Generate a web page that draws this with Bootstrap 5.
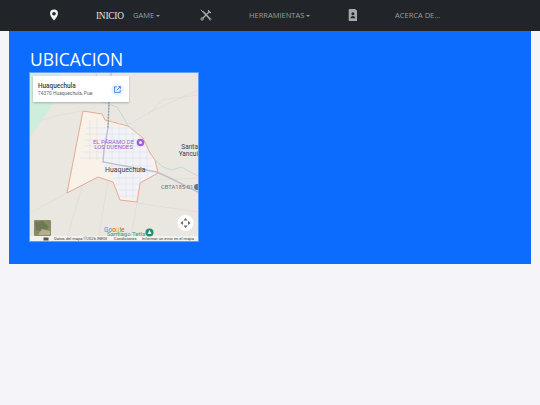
<!DOCTYPE html>
<html lang="es">
<head>
  <meta charset="UTF-8" />
  <meta name="viewport" content="width=device-width, initial-scale=1" />
  <title>Ubicacion</title>
  <link href="https://cdn.jsdelivr.net/npm/bootstrap@5.3.0/dist/css/bootstrap.min.css" rel="stylesheet" />
  <style>
    body {
      font-family: "Open Sans", sans-serif;
      background-color: #f4f4f9;
      min-height: 405px;
    }
    .top-bar {
      height: 31px;
      background-color: #212529;
      padding: 0 0 1px 48px;
    }
    .top-link {
      color: #9a9da0;
      font-size: 7.5px;
      line-height: 30px;
      text-decoration: none;
      white-space: nowrap;
    }
    .top-home {
      color: #e4e4e4;
      font-family: "Liberation Serif", serif;
      font-size: 9.4px;
      letter-spacing: -.25px;
      line-height: 31px;
    }
    .top-link.dropdown-toggle::after {
      margin-left: 2px;
      border-top-width: 2.5px;
      border-right-width: 2.5px;
      border-left-width: 2.5px;
      vertical-align: 1.5px;
    }
    .top-icon { display: block; }
    .slot-pin { width: 48px; }
    .slot-home { width: 37px; padding-top: 2px; }
    .slot-game { width: 67px; }
    .slot-tools { width: 49px; }
    .slot-tools-menu { width: 98.5px; }
    .slot-book { width: 47.5px; }
    .blue-panel {
      margin: 0 9px;
      height: 233px;
      background-color: #0b6cfd;
      padding: 16px 20px 0;
      color: #fff;
    }
    .blue-panel h1 {
      font-size: 17.4px;
      line-height: 25px;
      margin: 0 0 0 1px;
      font-weight: 400;
    }
    .map-box {
      width: 170px;
      height: 170px;
      position: relative;
      border: 1px solid #5fa0f5;
      background-color: #eeebe4;
      overflow: hidden;
    }
    .map-box svg { display: block; }
    .place-card {
      position: absolute;
      left: 3px;
      top: 3px;
      width: 96px;
      height: 26px;
      background-color: #fff;
      color: #3c4043;
      padding: 5px 5px;
      box-shadow: 0 1px 2px rgba(0,0,0,.25);
    }
    .place-name {
      font-family: "Roboto", sans-serif;
      font-size: 6.4px;
      font-weight: 500;
      line-height: 8px;
      white-space: nowrap;
    }
    .place-addr {
      font-family: "Roboto", sans-serif;
      font-size: 4.9px;
      line-height: 7px;
      color: #5f6368;
      white-space: nowrap;
    }
    .open-btn {
      width: 13px;
      height: 13px;
      border-radius: 50%;
      background-color: #edf2fb;
      flex: none;
    }
    .map-label { font-family: "Roboto", sans-serif; }
  </style>
</head>
<body>
  <nav class="top-bar d-flex align-items-center">
    <div class="slot-pin">
      <svg class="top-icon" width="12" height="12" viewBox="0 0 12 12"><path fill="#f2f2f2" fill-rule="evenodd" d="M6 .6A4 4 0 0 0 2 4.6C2 7.4 6 11.6 6 11.6s4-4.2 4-7A4 4 0 0 0 6 .6zM6 2.9a1.8 1.8 0 1 1 0 3.6 1.8 1.8 0 0 1 0-3.6z"/></svg>
    </div>
    <div class="slot-home"><a class="top-link top-home" href="#">INICIO</a></div>
    <div class="slot-game"><a class="top-link dropdown-toggle" href="#">GAME</a></div>
    <div class="slot-tools">
      <svg class="top-icon" width="12" height="12" viewBox="0 0 12 12" fill="none" stroke="#a6a8aa"><path stroke-width="1.7" d="M3 2.500 10 10"/><path stroke-width="1" d="M.8 .8 3 3"/><path stroke-width="1.300" d="M9.500 2.500 2.500 9.500"/><path stroke-width="1.300" d="M8.500 1A2.200 2.200 0 0 0 11 3.500"/><circle cx="2.100" cy="10" r="1.200" stroke-width="1"/><circle cx="10.200" cy="10.200" r=".9" stroke-width=".8"/></svg>
    </div>
    <div class="slot-tools-menu"><a class="top-link dropdown-toggle" href="#">HERRAMIENTAS</a></div>
    <div class="slot-book">
      <svg class="top-icon" width="10" height="12" viewBox="0 0 10 12"><path fill="#a6a8aa" fill-rule="evenodd" d="M1.500 0H7L9 1.500V12H1.500A.8.8 0 0 1 .7 11.200V.8A.8.8 0 0 1 1.500 0zM4.900 3.200a1.500 1.500 0 1 0 0 3 1.500 1.500 0 0 0 0-3zM2.400 9.300h5C7.400 7.800 6.300 6.900 4.900 6.900S2.400 7.800 2.400 9.300z"/></svg>
    </div>
    <div><a class="top-link" href="#">ACERCA DE...</a></div>
  </nav>

  <main class="blue-panel">
    <h1>UBICACION</h1>
    <div class="map-box">
      <svg width="168" height="168" viewBox="30 73 168 168">
        <rect x="30" y="73" width="168" height="168" fill="#e9e7e0"/>
        <!-- zona verde arriba a la izquierda -->
        <path fill="#cdeedd" d="M30 73H60L54 102 42 120 30 137z"/>
        <!-- caminos tenues -->
        <g fill="none" stroke="#dcdbd5" stroke-width=".7">
          <path d="M30 213 67 193"/><path d="M84 180 66 241"/><path d="M108 181 98 241"/>
          <path d="M137 203 130 241"/><path d="M137 203 198 212"/><path d="M128 125 150 112 198 90"/>
          <path d="M148 115 162 100 198 95"/><path d="M75 160 100 165"/><path d="M158 180 198 178"/>
          <path d="M42 120 60 115 83 111"/>
        </g>
        <!-- municipio -->
        <path fill="#f8f2e9" stroke="#e58a78" stroke-width=".7" d="M83 111 102 114 105 120 128 126 143 138 150 153 155 160 158 173 140 183 137 202 120 200 117 192 113 182 98 177 67 193 75 152z"/>
        <!-- cuadricula del pueblo -->
        <path fill="#f3f3f7" d="M100 125 128 128 141 139 149 153 154 172 139 182 136 200 121 198 117 185 112 176 103 172z"/>
        <g fill="none" stroke="#e0e2ec" stroke-width=".7">
          <path d="M86 128H136M85 134H141M84 140H145M84 146H147M82 152H149M80 158H152M104 166H154M108 172H154M113 178H142M116 184H138M118 190H137M120 196H136"/>
          <path d="M90 120V160M97 118V160M112 121V175M119 123V183M126 126V198M133 128V200M140 136V182M147 148V176"/>
        </g>
        <!-- rio y carretera -->
        <path fill="none" stroke="#a9d5dd" stroke-width=".7" d="M96 73 102 102 117 107 128 125"/>
        <path fill="none" stroke="#a9d5dd" stroke-width=".7" d="M155 160 163 167 172 170 181 167 198 176"/>
        <path fill="none" stroke="#bcc1cc" stroke-width="1.400" d="M111 73 109 102 108 128 104 150 103 162 157 172 170 178 198 192"/>
        <path fill="none" stroke="#8f939c" stroke-width="1.100" stroke-dasharray="1.500 1.500" d="M109 102 108 128"/>
        <text class="map-label" x="113.500" y="143.500" font-size="6" fill="#a15ed6" text-anchor="middle">EL PÁRAMO DE</text>
        <text class="map-label" x="113.500" y="149" font-size="6" fill="#a15ed6" text-anchor="middle">LOS DUENDES</text>
        <circle cx="140.500" cy="142.500" r="3.800" fill="#a15ed6"/>
        <circle cx="140.500" cy="142.500" r="1.500" fill="#f3e9fb"/>
        <text class="map-label" x="105" y="172" font-size="6.900" fill="#3c4043">Huaquechula</text>
        <text class="map-label" x="198" y="149" font-size="6.500" fill="#3c4043" text-anchor="end">Santa</text>
        <text class="map-label" x="198" y="156" font-size="6.500" fill="#3c4043" text-anchor="end">Yancui</text>
        <text class="map-label" x="161" y="189" font-size="5.800" fill="#70757a">CBTA185-01</text>
        <circle cx="197" cy="187" r="3" fill="#5f7a99"/>
        <!-- mini mapa satelite -->
        <rect x="34" y="220" width="17" height="16" rx="1" fill="#8b8a68"/>
        <path fill="#6f7a55" d="M35 222 43 221 49 227 44 232 36 230z"/>
        <path fill="#b8ad8e" d="M42 229 50 231 50 235 38 235z"/>
        <!-- control de camara -->
        <circle cx="185.500" cy="223" r="8" fill="#fff"/>
        <g fill="#666"><path d="M185.500 218 187.500 220.500H183.500z"/><path d="M185.500 228 187.500 225.500H183.500z"/><path d="M180.500 223 183 221V225z"/><path d="M190.500 223 188 221V225z"/></g>
        <!-- pie del mapa -->
        <rect x="30" y="236" width="168" height="5" fill="#f2f2ee"/>
        <text class="map-label" x="104" y="232" font-size="6.500" fill="#4285f4">Go<tspan fill="#ea4335">o</tspan><tspan fill="#fbbc05">g</tspan><tspan fill="#34a853">l</tspan><tspan fill="#ea4335">e</tspan></text>
        <text class="map-label" x="107" y="236" font-size="6" fill="#2f9e83">Santiago Tetla</text>
        <circle cx="149.500" cy="232.500" r="4" fill="#1e8e6e"/>
        <path fill="#fff" d="M149.500 230 151.500 234H147.500z"/>
        <rect x="43.500" y="237.500" width="5" height="3" fill="#555"/>
        <text class="map-label" x="54" y="240.300" font-size="4.100" fill="#444">Datos del mapa ©2026 INEGI</text>
        <text class="map-label" x="114" y="240.300" font-size="4.100" fill="#444">Condiciones</text>
        <text class="map-label" x="142" y="240.300" font-size="4.100" fill="#444">Informar un error en el mapa</text>
      </svg>
      <div class="place-card d-flex justify-content-between align-items-center">
        <div>
          <div class="place-name">Huaquechula</div>
          <div class="place-addr">74370 Huaquechula, Pue.</div>
        </div>
        <div class="open-btn d-flex align-items-center justify-content-center">
          <svg width="7" height="7" viewBox="0 0 7 7" fill="none" stroke="#1a73e8" stroke-width=".8"><path d="M3 .8H.6V6.400H6.200V4"/><path d="M2.800 4.200 6.200.8M4.200.6H6.400V2.800"/></svg>
        </div>
      </div>
    </div>
  </main>

  <script src="https://cdn.jsdelivr.net/npm/bootstrap@5.3.0/dist/js/bootstrap.bundle.min.js"></script>
</body>
</html>
